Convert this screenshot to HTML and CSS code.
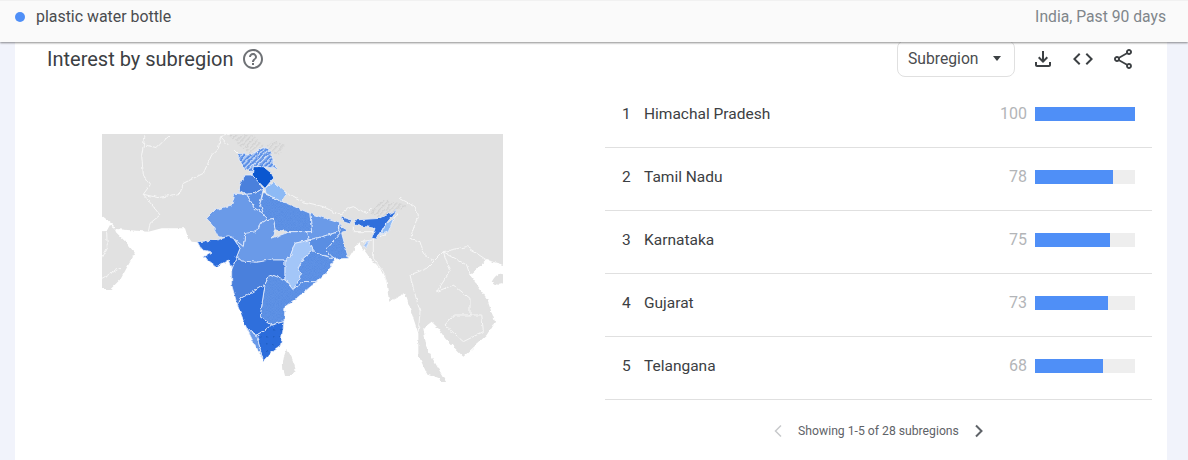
FILE: index.html
```html
<!DOCTYPE html>
<html lang="en">
<head>
<meta charset="utf-8">
<title>Interest by subregion</title>
<link rel="stylesheet" href="styles.css">
</head>
<body>
<header class="topbar">
  <div class="term"><span class="dot"></span><span>plastic water bottle</span></div>
  <div class="scope">India, Past 90 days</div>
</header>
<main class="card">
  <div class="card-head">
    <div class="title-wrap">
      <h2 class="title">Interest by subregion</h2>
      <svg class="help" viewBox="0 0 24 24"><path d="M11 18h2v-2h-2v2zm1-16C6.48 2 2 6.48 2 12s4.48 10 10 10 10-4.48 10-10S17.52 2 12 2zm0 18c-4.41 0-8-3.59-8-8s3.59-8 8-8 8 3.59 8 8-3.59 8-8 8zm0-14c-2.21 0-4 1.79-4 4h2c0-1.1.9-2 2-2s2 .9 2 2c0 2-3 1.75-3 5h2c0-2.25 3-2.5 3-5 0-2.21-1.79-4-4-4z"/></svg>
    </div>
    <div class="tools">
      <div class="select"><span>Subregion</span><span class="caret"></span></div>
      <svg class="tool" viewBox="0 0 24 24"><path d="M18 15v3H6v-3H4v3c0 1.1.9 2 2 2h12c1.1 0 2-.9 2-2v-3h-2zm-1-4-1.41-1.41L13 12.17V4h-2v8.17L8.41 9.59 7 11l5 5 5-5z"/></svg>
      <svg class="tool" viewBox="0 0 24 24"><path d="M9.4 16.6L4.8 12l4.6-4.6L8 6l-6 6 6 6 1.4-1.4zm5.2 0l4.6-4.6-4.6-4.6L16 6l6 6-6 6-1.4-1.4z"/></svg>
      <svg class="tool" viewBox="0 0 24 24"><path d="M18 16.08c-.76 0-1.44.3-1.96.77L8.91 12.7c.05-.23.09-.46.09-.7s-.04-.47-.09-.7l7.05-4.11c.54.5 1.25.81 2.04.81 1.66 0 3-1.34 3-3s-1.34-3-3-3-3 1.34-3 3c0 .24.04.47.09.7L8.04 9.81C7.5 9.31 6.79 9 6 9c-1.66 0-3 1.34-3 3s1.34 3 3 3c.79 0 1.5-.31 2.04-.81l7.12 4.16c-.05.21-.08.43-.08.65 0 1.61 1.31 2.92 2.92 2.92 1.61 0 2.92-1.31 2.92-2.92s-1.31-2.92-2.92-2.92zM18 4c.55 0 1 .45 1 1s-.45 1-1 1-1-.45-1-1 .45-1 1-1zM6 13c-.55 0-1-.45-1-1s.45-1 1-1 1 .45 1 1-.45 1-1 1zm12 7.02c-.55 0-1-.45-1-1s.45-1 1-1 1 .45 1 1-.45 1-1 1z"/></svg>
    </div>
  </div>
  <div class="card-body">
    <div class="map-col">
      <svg class="map" viewBox="36 27 1203 744">
        <defs>
          <filter id="wig" x="-5%" y="-5%" width="110%" height="110%" color-interpolation-filters="sRGB">
            <feTurbulence type="fractalNoise" baseFrequency="0.07" numOctaves="2" seed="4" result="n"/>
            <feDisplacementMap in="SourceGraphic" in2="n" scale="11" xChannelSelector="R" yChannelSelector="G"/>
          </filter>
          <pattern id="hatch" width="11" height="11" patternUnits="userSpaceOnUse" patternTransform="rotate(45)"><rect width="11" height="11" fill="#5b8fe6"/><rect width="4" height="11" fill="#cfdff8"/></pattern>
          <pattern id="greyhatch" width="11" height="11" patternUnits="userSpaceOnUse" patternTransform="rotate(45)"><rect width="11" height="11" fill="#e1e1e1"/><rect width="4" height="11" fill="#d2d2d2"/></pattern>
          <pattern id="dots" width="9" height="9" patternUnits="userSpaceOnUse"><rect width="9" height="9" fill="#5f92e5"/><rect x="1" y="1" width="3" height="3" fill="#5287e0"/><rect x="5" y="5" width="3" height="3" fill="#5287e0"/></pattern>
          <pattern id="tn" width="21" height="21" patternUnits="userSpaceOnUse"><rect width="21" height="21" fill="#2b6cdb"/><rect x="4" y="4" width="3" height="3" fill="#134ea8"/></pattern>
        </defs>
        <rect x="36" y="27" width="1203" height="744" fill="#e1e1e1"/>
        <g filter="url(#wig)">
          <path fill="#fff" d="M0 800V492H62L92 462 112 425 135 385 108 352 78 322 70 300 40 275 0 285V320L50 318 60 300 78 312 175 320 215 310 285 310 292 332 305 350 322 352 335 375 365 380 340 395 380 425 415 405 425 435 425 480 442 540 470 610 495 660 520 708 545 680 572 660 582 590 585 545 625 515 680 470 720 430 735 402 775 400 805 352 835 392 870 430 890 470 897 530 945 505 965 565 985 625 985 690 1010 745 1048 760 1060 800ZM1085 800 1010 670 1000 610 1025 590 1045 610 1065 640 1120 695 1190 630 1215 590 1190 520 1140 450 1190 405 1260 425V800Z"/>
          <path fill="#e1e1e1" d="M1205 470Q1222 440 1239 448V475Q1220 485 1205 470ZM590 672Q610 700 617 735 605 755 585 752 570 715 590 672Z"/>
          <g class="bord">
            <path d="M165 30 155 90 160 150 180 180 160 208 205 218 270 205 280 175 340 145 365 90 385 70 392 35"/>
            <path d="M240 30 200 68 165 60"/>
            <path d="M160 208 190 245 210 270 180 295 175 320"/>
            <path d="M392 35 420 27M415 60 392 35M430 70 445 85M505 190 528 205"/>
            <path d="M585 200 640 230 700 245 750 270M750 270 775 250 790 245 830 265 845 250M930 220 975 245 985 270 960 340 990 350 1000 385 1030 410 1060 380 1130 365 1190 405"/>
            <path d="M790 300 790 320 850 320M810 350 850 345 850 400 880 440 890 470M870 335 885 330 900 300 925 265"/>
            <path d="M1030 410 1010 430 960 450 970 490 990 560 985 620M1060 380 1080 440 1040 500 1090 480 1140 520 1140 570 1175 570 1180 620 1120 650 1065 600 1090 570 1140 570M1140 450 1130 420 1060 380"/>
            <path d="M36 400 52 370 50 320M36 460 90 430"/>
          </g>
          <path fill="url(#greyhatch)" d="M415 30H490L522 64 480 86 445 60ZM530 62 555 45 585 60 565 92 548 84ZM838 262 880 225 940 236 950 248 920 256 870 280Z"/>
          <g class="states">
            <path fill="url(#hatch)" d="M445 85 480 90 525 65 545 85 550 110 565 135 540 128 520 125 490 125 485 145 460 125 445 100Z"/>
            <path fill="#4a80dc" d="M462 150 487 150 505 170 520 192 495 205 470 208 445 195Z"/>
            <path fill="#6a9ae8" d="M435 205 470 208 480 225 495 250 520 265 530 285 505 300 500 320 490 350 465 325 460 365 430 340 385 335 370 305 350 280 375 255 425 240Z"/>
            <path fill="#5a8ee3" d="M470 208 495 205 520 192 510 235 520 265 495 250 480 225Z"/>
            <path fill="url(#dots)" d="M520 205 545 215 575 230 590 235 660 265 665 320 650 320 600 320 555 315 550 280 530 285 520 265 510 235Z"/>
            <path fill="#8dbaf5" d="M525 190 550 170 590 205 575 230 545 215 528 205Z"/>
            <path fill="#0b57d0" d="M490 125 520 125 545 145 550 160 525 190 505 170 487 150Z"/>
            <path fill="#6a9ae8" d="M465 325 500 320 505 300 530 285 550 280 555 315 545 340 600 320 650 320 655 345 615 355 600 395 585 405 540 405 500 412 455 408 440 395 450 370 430 340 460 365Z"/>
            <path fill="#2b6cdb" d="M322 350 380 345 415 335 430 340 450 370 440 395 425 435 415 405 380 425 340 395 365 380 335 375Z"/>
            <path fill="#4a80dc" d="M425 435 440 395 455 408 500 412 540 405 585 405 585 425 585 465 560 455 540 448 525 478 490 500 452 520 442 540 425 480Z"/>
            <path fill="#a3c6f8" d="M615 355 655 345 670 375 640 400 625 430 635 445 610 495 585 465 585 405 600 395Z"/>
            <path fill="#6a9ae8" d="M660 265 750 295 745 320 700 335 655 345 650 320 665 320Z"/>
            <path fill="#5a8ee3" d="M655 345 700 335 745 320 750 325 705 375 735 402 680 385 670 375Z"/>
            <path fill="url(#dots)" d="M750 295 770 320 755 325 775 400 735 402 705 375 750 325Z"/>
            <path fill="url(#dots)" d="M640 400 670 375 680 385 735 402 720 430 680 470 640 470 610 495 635 445 625 430Z"/>
            <path fill="url(#dots)" d="M540 448 560 455 585 465 610 495 640 470 680 470 625 515 585 545 582 590 545 600 510 575 525 478Z"/>
            <path fill="#2f6fdc" d="M452 520 490 500 525 478 510 575 545 600 525 615 500 630 470 610 442 540Z"/>
            <path fill="#6a9ae8" d="M470 610 500 630 518 700 495 660Z"/>
            <path fill="url(#tn)" d="M500 630 525 615 545 600 582 590 572 660 545 680 520 708 518 700Z"/>
            <path fill="#4a80dc" d="M755 275 785 285 780 297 760 290Z"/>
            <path fill="#2f6fdc" d="M792 285 870 280 921 255 885 300 860 342 845 340 855 310 795 300Z"/>
            <path fill="#8dbaf5" d="M885 300 912 278 895 320 870 330Z"/>
            <path fill="#a3c6f8" d="M820 360 840 345 830 370Z"/>
          </g>
        </g>
      </svg>
    </div>
    <div class="list-col">
      <div class="row"><span class="rank">1</span><span class="name">Himachal Pradesh</span><span class="val">100</span><span class="track"><span class="fill" style="width:100%"></span></span></div>
      <div class="row"><span class="rank">2</span><span class="name">Tamil Nadu</span><span class="val">78</span><span class="track"><span class="fill" style="width:78%"></span></span></div>
      <div class="row"><span class="rank">3</span><span class="name">Karnataka</span><span class="val">75</span><span class="track"><span class="fill" style="width:75%"></span></span></div>
      <div class="row"><span class="rank">4</span><span class="name">Gujarat</span><span class="val">73</span><span class="track"><span class="fill" style="width:73%"></span></span></div>
      <div class="row"><span class="rank">5</span><span class="name">Telangana</span><span class="val">68</span><span class="track"><span class="fill" style="width:68%"></span></span></div>
      <div class="pager">
        <svg class="chev off" viewBox="0 0 10 14"><path d="M8 1.5 2.5 7 8 12.5"/></svg>
        <span class="pager-text">Showing 1-5 of 28 subregions</span>
        <svg class="chev" viewBox="0 0 10 14"><path d="M2 1.5 7.5 7 2 12.5"/></svg>
      </div>
    </div>
  </div>
</main>
</body>
</html>
```
FILE: styles.css
```css
* { box-sizing: border-box; }
html, body { margin: 0; height: 100%; }
body {
  background: #f1f3fb;
  font-family: Roboto, "Open Sans", sans-serif;
  color: #3c4043;
  overflow: hidden;
  position: relative;
}
.topbar {
  position: relative;
  z-index: 2;
  height: 42px;
  display: flex;
  justify-content: space-between;
  align-items: center;
  padding: 0 22px 10px 15px;
  background: #fafafa;
  border-top: 1px solid #f1f1f1;
  box-shadow: 0 1px 2px rgba(0,0,0,.45);
  font-size: 15.7px;
}
.term { display: flex; align-items: center; gap: 11px; color: #4a4c4f; font-size: 15.9px; }
.dot { width: 10px; height: 10px; border-radius: 50%; background: #4f8ff7; }
.scope { color: #80868b; }
.card {
  margin: 0 21px 0 15px;
  height: 418px;
  background: #fff;
  overflow: hidden;
}
.card-head {
  height: 34px;
  display: flex;
  justify-content: space-between;
  align-items: center;
  padding: 0 32px;
}
.title-wrap { display: flex; align-items: center; gap: 7px; }
.title { margin: 0; font-size: 20px; font-weight: 400; color: #3c4043; }
.help { width: 24px; height: 24px; fill: #6f7276; }
.tools { display: flex; align-items: center; }
.select {
  width: 118px;
  height: 37px;
  margin: -1px 16px 0 0;
  padding: 0 13px 0 10px;
  display: flex;
  justify-content: space-between;
  align-items: center;
  border: 1px solid #e0e0e0;
  border-radius: 8px;
  font-size: 15.7px;
  color: #4a4c4f;
}
.caret { border: 4px solid transparent; border-top: 5px solid #3c4043; border-bottom: 0; }
.tool { width: 24px; height: 24px; fill: #3c4043; margin-left: 16px; }
.select + .tool { margin-left: 0; }
.card-body { display: flex; justify-content: space-between; }
.map-col { padding: 58px 0 0 87px; }
.map { display: block; width: 401px; height: 248px; }
.bord path { fill: none; stroke: #f6f6f6; stroke-width: 3; }
.states path { stroke: #e6eefc; stroke-width: 2.4; stroke-linejoin: round; }
.list-col { width: 547px; margin-right: 15px; padding-top: 9px; }
.row {
  height: 63px;
  display: flex;
  align-items: center;
  padding: 0 17px 5px 17px;
  border-bottom: 1px solid #e0e0e0;
  font-size: 15.5px;
  color: #3c4043;
}
.rank { width: 22px; }
.name { flex: 1; }
.val { color: #b3b5b8; font-size: 16px; margin-right: 8px; }
.track { width: 100px; height: 14px; background: #eeeeee; display: block; }
.fill { display: block; height: 100%; background: #4f8ff7; }
.pager {
  height: 62px;
  display: flex;
  justify-content: center;
  align-items: center;
  gap: 15px;
  font-size: 12.2px;
  color: #5f6368;
}
.pager-text { color: #5f6368; }
.chev { width: 10px; height: 14px; fill: none; stroke: #5f6368; stroke-width: 2; }
.chev.off { stroke: #c8cacc; stroke-width: 1.5; }
```
